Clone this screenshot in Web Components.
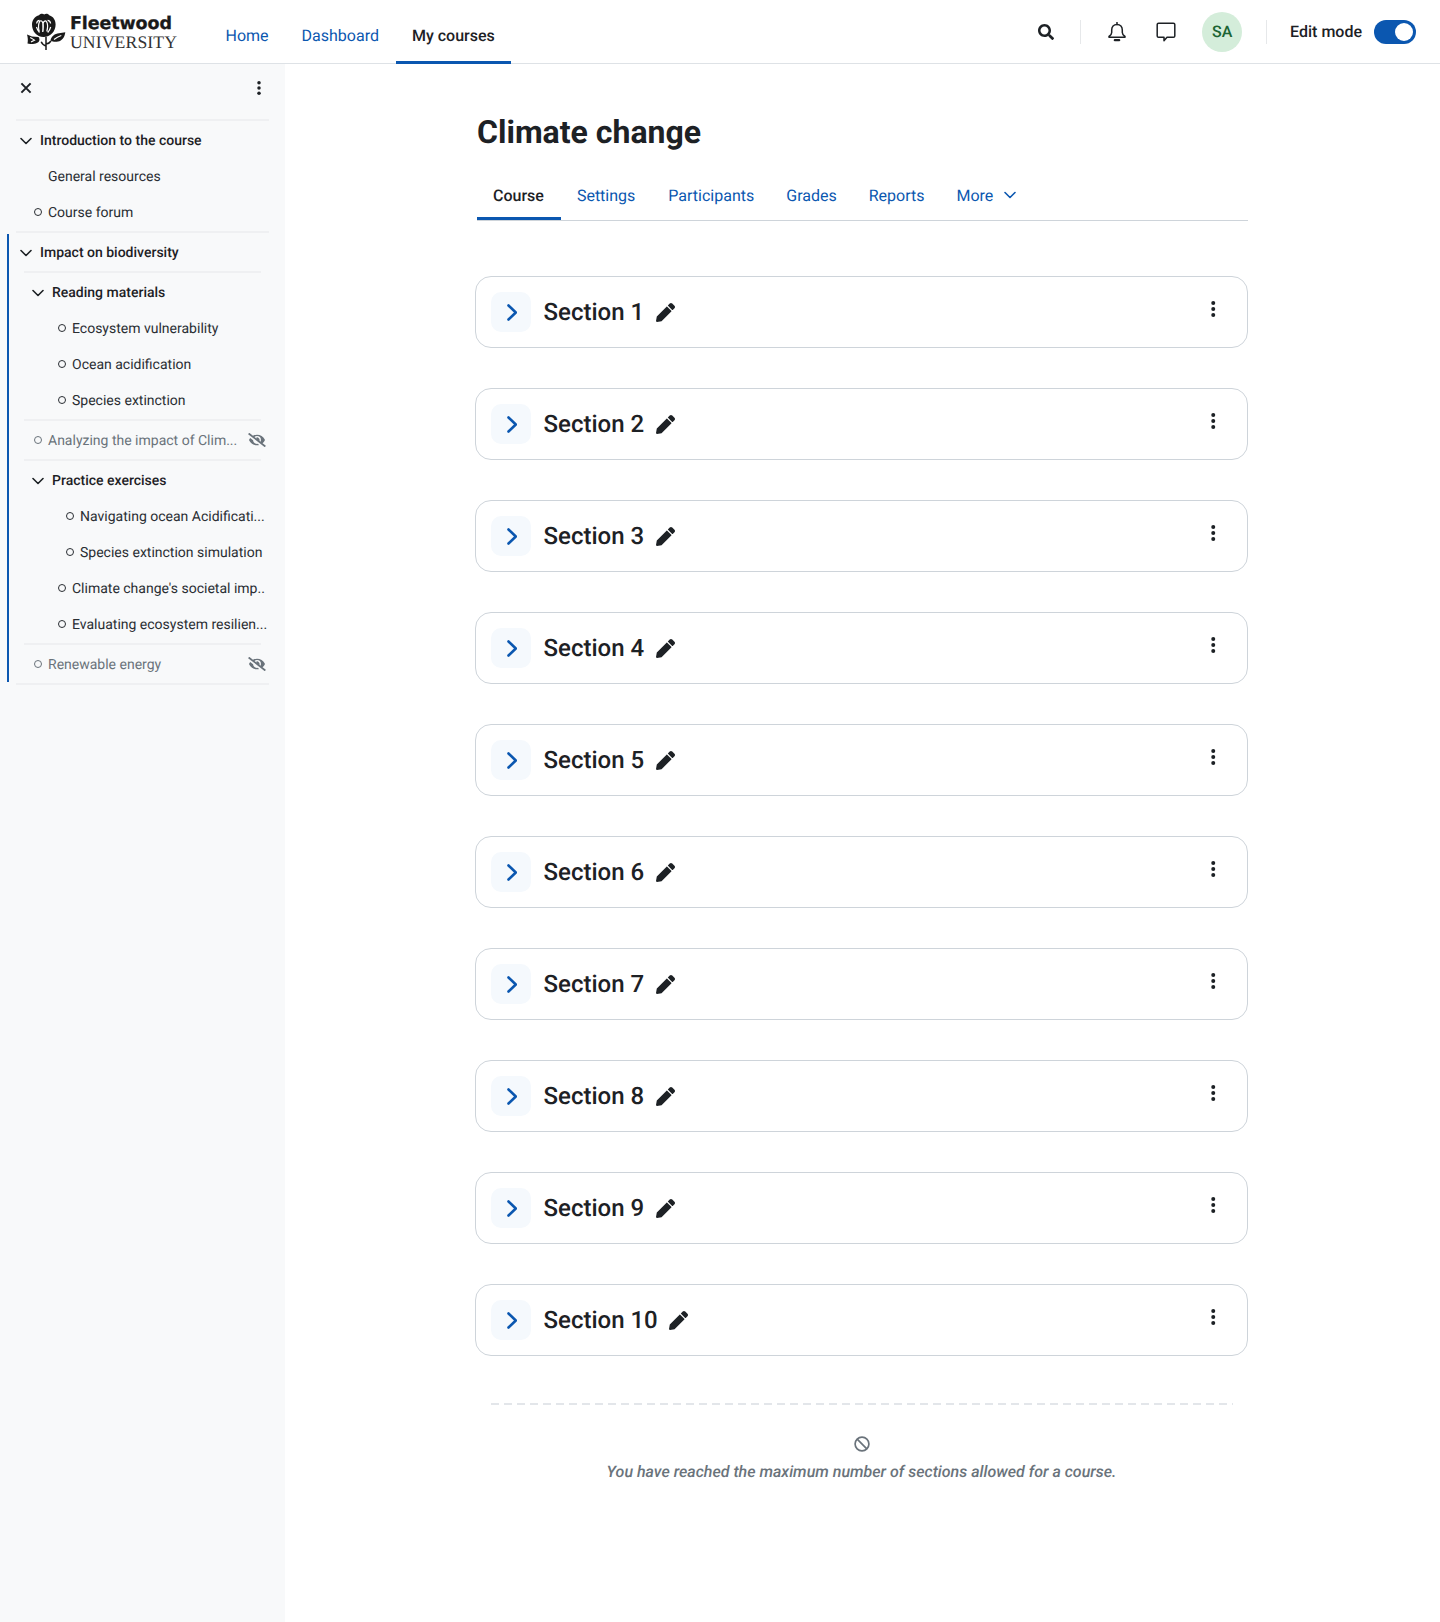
<!DOCTYPE html>
<html lang="en">
<head>
<meta charset="utf-8">
<title>Climate change</title>
<style>
  body { margin: 0; background: #fff; color: #1d2125; font-family: Roboto, "Liberation Sans", sans-serif; text-rendering: geometricPrecision; }
</style>
</head>
<body>
<course-page>
  <site-header slot="header"></site-header>

  <course-index slot="side">
    <index-divider></index-divider>
    <index-row kind="section">Introduction to the course</index-row>
    <index-row pad="32">General resources</index-row>
    <index-row kind="item" pad="18">Course forum</index-row>
    <index-divider></index-divider>
    <index-current>
      <index-row kind="section">Impact on biodiversity</index-row>
      <index-divider inset></index-divider>
      <index-row kind="section" pad="16">Reading materials</index-row>
      <index-row kind="item" pad="42">Ecosystem vulnerability</index-row>
      <index-row kind="item" pad="42">Ocean acidification</index-row>
      <index-row kind="item" pad="42">Species extinction</index-row>
      <index-divider inset></index-divider>
      <index-row kind="item" pad="18" muted>Analyzing the impact of Clim...</index-row>
      <index-divider inset></index-divider>
      <index-row kind="section" pad="16">Practice exercises</index-row>
      <index-row kind="item" pad="50">Navigating ocean Acidificati...</index-row>
      <index-row kind="item" pad="50">Species extinction simulation</index-row>
      <index-row kind="item" pad="42">Climate change's societal imp..</index-row>
      <index-row kind="item" pad="42">Evaluating ecosystem resilien...</index-row>
      <index-divider inset></index-divider>
      <index-row kind="item" pad="18" muted>Renewable energy</index-row>
    </index-current>
    <index-divider></index-divider>
  </course-index>

  <course-content heading="Climate change">
    <course-tabs></course-tabs>
    <section-card>Section 1</section-card>
    <section-card>Section 2</section-card>
    <section-card>Section 3</section-card>
    <section-card>Section 4</section-card>
    <section-card>Section 5</section-card>
    <section-card>Section 6</section-card>
    <section-card>Section 7</section-card>
    <section-card>Section 8</section-card>
    <section-card>Section 9</section-card>
    <section-card>Section 10</section-card>
    <section-limit>You have reached the maximum number of sections allowed for a course.</section-limit>
  </course-content>
</course-page>

<script>
const BLUE = "#0b57b0";

const ICONS = {
  pencil: `<svg viewBox="0 0 512 512" fill="currentColor"><path d="M497.9 142.1l-46.1 46.1c-4.7 4.7-12.3 4.7-17 0l-111-111c-4.7-4.7-4.7-12.3 0-17l46.1-46.1c18.7-18.7 49.1-18.7 67.9 0l60.1 60.1c18.8 18.7 18.8 49.1 0 67.9zM284.2 99.8L21.6 362.4.4 483.9c-2.9 16.4 11.4 30.6 27.8 27.8l121.5-21.3 262.6-262.6c4.7-4.7 4.7-12.3 0-17l-111-111c-4.8-4.7-12.4-4.7-17.1 0z"/></svg>`,
  search: `<svg viewBox="0 0 512 512" fill="currentColor"><path d="M505 442.7L405.3 343c-4.5-4.5-10.6-7-17-7H372c27.6-35.3 44-79.7 44-128C416 93.1 322.9 0 208 0S0 93.1 0 208s93.1 208 208 208c48.3 0 92.7-16.4 128-44v16.3c0 6.4 2.5 12.5 7 17l99.7 99.7c9.4 9.4 24.6 9.4 33.9 0l28.3-28.3c9.4-9.4 9.4-24.6.1-34zM208 336c-70.7 0-128-57.2-128-128 0-70.7 57.2-128 128-128 70.7 0 128 57.2 128 128 0 70.7-57.2 128-128 128z"/></svg>`,
  eyeslash: `<svg viewBox="0 0 640 512" fill="currentColor"><path d="M320 400c-75.85 0-137.25-58.71-142.9-133.11L72.2 185.82c-13.79 17.3-26.48 35.59-36.72 55.59a32.35 32.35 0 0 0 0 29.19C89.71 376.41 197.07 448 320 448c26.91 0 52.87-4 77.89-10.46L346 397.39a144.13 144.13 0 0 1-26 2.61zm313.82 58.1l-110.55-85.44a331.25 331.25 0 0 0 81.25-102.07 32.35 32.35 0 0 0 0-29.19C550.29 135.59 442.93 64 320 64a308.15 308.15 0 0 0-147.32 37.7L45.46 3.37A16 16 0 0 0 23 6.18L3.37 31.45A16 16 0 0 0 6.18 53.9l588.36 454.73a16 16 0 0 0 22.46-2.81l19.64-25.27a16 16 0 0 0-2.82-22.45zm-183.72-142l-39.3-30.38A94.75 94.75 0 0 0 416 256a94.76 94.76 0 0 0-121.31-92.21A47.65 47.65 0 0 1 304 192a46.64 46.64 0 0 1-1.54 10l-73.61-56.89A142.31 142.31 0 0 1 320 112a143.92 143.92 0 0 1 144 144c0 21.63-5.29 41.79-13.9 60.11z"/></svg>`,
  bell: `<svg viewBox="0 0 18 20" fill="none" stroke="currentColor" stroke-width="1.5" stroke-linejoin="round"><path d="M9 2.500c-3.400 0-5.300 2.500-5.300 5.500v2.600c0 1.600-1 2.800-2.700 3.900v.8h16v-.8c-1.700-1.100-2.700-2.300-2.700-3.900V8c0-3-1.900-5.500-5.300-5.500z"/><path d="M9 .5v2" stroke-linecap="round"/><path d="M6.800 18.200h4.400" stroke-width="2.200" stroke-linecap="round"/></svg>`,
  message: `<svg viewBox="0 0 20 20" fill="none" stroke="currentColor" stroke-width="1.5" stroke-linejoin="round"><path d="M2.600 1.200h14.800c.8 0 1.400.6 1.400 1.400v11.300c0 .8-.6 1.400-1.400 1.400H11l-3 3.400v-3.400H2.600c-.8 0-1.400-.6-1.400-1.400V2.600c0-.8.6-1.400 1.400-1.400z"/></svg>`,
  close: `<svg viewBox="0 0 12 12" fill="none" stroke="currentColor" stroke-width="2"><path d="M1.400 1.400l9.200 9.200M10.600 1.400l-9.200 9.200"/></svg>`,
  dots: `<svg viewBox="0 0 4 16" fill="currentColor"><circle cx="2" cy="2" r="2"/><circle cx="2" cy="8" r="2"/><circle cx="2" cy="14" r="2"/></svg>`,
  down: `<svg viewBox="0 0 12 8" fill="none" stroke="currentColor" stroke-width="1.6" stroke-linecap="round" stroke-linejoin="round"><path d="M1 1.500l5 5 5-5"/></svg>`,
  right: `<svg viewBox="0 0 10 17" fill="none" stroke="currentColor" stroke-width="2.600" stroke-linecap="round" stroke-linejoin="round"><path d="M1.500 1.500L8.800 8.500 1.500 15.500"/></svg>`,
  blocked: `<svg viewBox="0 0 16 16" fill="none" stroke="currentColor" stroke-width="1.700"><circle cx="8" cy="8" r="6.900"/><path d="M3.200 3.200l9.600 9.600"/></svg>`,
  logo: `<svg viewBox="0 0 40 38" fill="currentColor">
    <path d="M13 2.200c1.600-1.700 4-1.900 5.200-.6 1.500-1.300 4-1 5.400.9 3.600 1 6 4.500 6 9 0 6.800-5 12.500-12 12.500S6 18.300 6 11.500c0-4.500 2.800-8 7-9.300z"/>
    <path d="M10.500 14c.6 2.200 1.600 4 3 5.500M13.300 18.500c-1-3.500-1-7.200.2-9.800 1.400-1.800 3-.8 3.300 1.500.2 2.800.2 5.800-.1 8.800M17 18.500c.3-3 .4-6 .2-8.400.6-2.200 2.400-2.800 3.400-1.300.9 1.600 1.200 6 .2 9.700M24.700 14c-.6 2.200-1.600 4-3 5.500M10.600 10.500c.3-2 1.200-3.100 2.900-3.100M24.600 10.500c-.3-2-1.300-3.100-3-3.100" fill="none" stroke="#fff" stroke-width="1.200"/>
    <path d="M20 24v13M20 33c-2.400-.5-3.800-1.800-4.800-4.200M20 31c2.300-.3 3.900-1.200 5-3" fill="none" stroke="currentColor" stroke-width="1.500"/>
    <path d="M1 21.500l5 2 6.500.6c2.200 3 .5 5.800-2.800 6.300C6.500 30.800 3.800 31.400 1.500 30.500c.6-3 .4-6-.5-9z"/>
    <path d="M24.500 27.500c.7-4.200 4.300-7 8.500-7.300l6.300-1c-.6 4.800-3.200 8.700-7.300 9.300-2.800.5-5.500.2-7.500-1z"/>
    <path d="M4.200 24.500l4.300 2.600-3.500 1.800M28 26.500c2.200-1.900 4.800-3.200 7.300-4" fill="none" stroke="#fff" stroke-width="1.100"/>
  </svg>`,
};

class AppIcon extends HTMLElement {
  connectedCallback() {
    const w = this.getAttribute("w") || 16;
    const h = this.getAttribute("h") || w;
    this.attachShadow({ mode: "open" }).innerHTML = `
      <style>
        :host { display: inline-flex; flex: none; width: ${w}px; height: ${h}px; }
        svg { display: block; width: 100%; height: 100%; }
      </style>
      ${ICONS[this.getAttribute("name")]}`;
  }
}
customElements.define("app-icon", AppIcon);

class CoursePage extends HTMLElement {
  constructor() {
    super();
    this.attachShadow({ mode: "open" }).innerHTML = `
      <style>
        :host { display: block; min-height: 1622px; }
        .body { display: grid; grid-template-columns: 285px 1fr; min-height: 1558px; }
      </style>
      <slot name="header"></slot>
      <div class="body">
        <slot name="side"></slot>
        <slot></slot>
      </div>`;
  }
}
customElements.define("course-page", CoursePage);

class SiteHeader extends HTMLElement {
  constructor() {
    super();
    this.attachShadow({ mode: "open" }).innerHTML = `
      <style>
        :host { display: flex; align-items: center; box-sizing: border-box; height: 64px; border-bottom: 1px solid #dee2e6; color: #1d2125; font-size: 16px; }
        .logo { display: flex; align-items: center; gap: 5px; margin-left: 26px; width: 183.500px; flex: none; color: #1a1a1a; }
        .words { display: flex; flex-direction: column; margin-top: 3px; margin-left: -1px; }
        .words b { font: 700 17.500px/18px "DejaVu Sans", sans-serif; letter-spacing: -.1px; -webkit-text-stroke: .3px; }
        .words span { font: 400 17.700px/18px "Liberation Serif", serif; color: #333; letter-spacing: .1px; }
        nav { display: flex; align-self: stretch; gap: 1px; margin-bottom: -1px; }
        nav a { display: flex; align-items: center; padding: 6px 16px 0; color: ${BLUE}; }
        nav a.on { color: #1d2125; font-weight: 500; box-shadow: inset 0 -3px 0 ${BLUE}; }
        .tools { margin-left: auto; display: flex; align-items: center; margin-right: 24px; }
        .sep { width: 1px; height: 24px; background: #e6e8ea; }
        .avatar { width: 40px; height: 40px; border-radius: 50%; background: #d4edda; color: #1c6534; font-weight: 500; display: flex; align-items: center; justify-content: center; }
        .mode { font-weight: 500; }
        .toggle { width: 42px; height: 24px; border-radius: 12px; background: ${BLUE}; margin-left: 12px; display: flex; align-items: center; justify-content: flex-end; padding-right: 3px; box-sizing: border-box; }
        .toggle i { width: 18px; height: 18px; border-radius: 50%; background: #fff; }
      </style>
      <div class="logo">
        <app-icon name="logo" w="40" h="38"></app-icon>
        <div class="words"><b>Fleetwood</b><span>UNIVERSITY</span></div>
      </div>
      <nav>
        <a>Home</a>
        <a>Dashboard</a>
        <a class="on">My courses</a>
      </nav>
      <div class="tools">
        <app-icon name="search" w="16" style="margin-right:1px"></app-icon>
        <div class="sep" style="margin:0 27px 0 25px"></div>
        <app-icon name="bell" w="18" h="20"></app-icon>
        <app-icon name="message" w="20" style="margin-left:30px"></app-icon>
        <div class="avatar" style="margin-left:26px">SA</div>
        <div class="sep" style="margin:0 23px 0 24px"></div>
        <span class="mode">Edit mode</span>
        <div class="toggle"><i></i></div>
      </div>`;
  }
}
customElements.define("site-header", SiteHeader);

class CourseIndex extends HTMLElement {
  constructor() {
    super();
    this.attachShadow({ mode: "open" }).innerHTML = `
      <style>
        :host { display: block; background: #f8f9fa; padding: 0 16px; font-size: 14px; line-height: 20px; }
        .head { display: flex; align-items: center; justify-content: space-between; height: 48px; margin-bottom: 7px; padding: 0 8px 0 4px; color: #1d2125; }
      </style>
      <div class="head">
        <app-icon name="close" w="12"></app-icon>
        <app-icon name="dots" w="4" h="14"></app-icon>
      </div>
      <slot></slot>`;
  }
}
customElements.define("course-index", CourseIndex);

class IndexDivider extends HTMLElement {
  constructor() {
    super();
    this.attachShadow({ mode: "open" }).innerHTML = `
      <style>
        :host { display: block; height: 2px; margin: 1px 0; background: #eff0f2; }
        :host([inset]) { margin: 1px 8px; }
      </style>`;
  }
}
customElements.define("index-divider", IndexDivider);

// the section the user is in, marked with the blue bar on its left
class IndexCurrent extends HTMLElement {
  constructor() {
    super();
    this.attachShadow({ mode: "open" }).innerHTML = `
      <style>
        :host { display: block; margin-left: -9px; padding-left: 7px; border-left: 2px solid ${BLUE}; }
      </style>
      <slot></slot>`;
  }
}
customElements.define("index-current", IndexCurrent);

class IndexRow extends HTMLElement {
  connectedCallback() {
    const kind = this.getAttribute("kind");
    const muted = this.hasAttribute("muted");
    let lead = "";
    if (kind === "section") lead = `<app-icon class="chev" name="down" w="12" h="8"></app-icon>`;
    if (kind === "item") lead = `<span class="dot"></span>`;
    this.attachShadow({ mode: "open" }).innerHTML = `
      <style>
        :host { display: flex; align-items: center; box-sizing: border-box; height: 36px; white-space: nowrap; padding: 1px 3px 0 ${this.getAttribute("pad") || 4}px; color: #2a2e33; }
        :host([kind="section"]) { font-weight: 500; color: #1d2125; }
        :host([muted]) { color: #6a737b; }
        .chev { margin-right: 8px; }
        .dot { flex: none; box-sizing: border-box; width: 8px; height: 8px; border: 1px solid currentColor; border-radius: 50%; margin: -1px 6px 0 0; }
        .end { margin: -1px 0 0 auto; }
      </style>
      ${lead}<slot></slot>
      ${muted ? `<app-icon class="end" name="eyeslash" w="18" h="14"></app-icon>` : ""}`;
  }
}
customElements.define("index-row", IndexRow);

class CourseContent extends HTMLElement {
  connectedCallback() {
    this.attachShadow({ mode: "open" }).innerHTML = `
      <style>
        :host { display: block; box-sizing: border-box; padding: 49px 0 0 190px; width: 963px; }
        h1 { margin: 0 0 21px 2px; font: 700 32px/38px Roboto, sans-serif; color: #1d2125; }
      </style>
      <h1>${this.getAttribute("heading")}</h1>
      <slot></slot>`;
  }
}
customElements.define("course-content", CourseContent);

class CourseTabs extends HTMLElement {
  constructor() {
    super();
    this.attachShadow({ mode: "open" }).innerHTML = `
      <style>
        :host { display: flex; height: 49px; box-sizing: border-box; margin: 0 0 55px 2px; border-bottom: 1px solid #ced4da; font-size: 16px; }
        a { display: flex; align-items: center; gap: 11px; padding: 0 16px 2px; height: 48px; box-sizing: border-box; color: ${BLUE}; }
        a.on { color: #1d2125; font-weight: 500; box-shadow: inset 0 -3px 0 ${BLUE}; padding-right: 17px; }
        a.wide { padding-right: 17px; }
      </style>
      <a class="on">Course</a>
      <a class="wide">Settings</a>
      <a>Participants</a>
      <a>Grades</a>
      <a>Reports</a>
      <a>More <app-icon name="down" w="12" h="8"></app-icon></a>`;
  }
}
customElements.define("course-tabs", CourseTabs);

class SectionCard extends HTMLElement {
  constructor() {
    super();
    this.attachShadow({ mode: "open" }).innerHTML = `
      <style>
        :host { display: flex; align-items: center; box-sizing: border-box; height: 72px; margin-bottom: 40px; padding: 0 31.500px 0 15px; border: 1px solid #ced4da; border-radius: 16px; background: #fff; color: #1d2125; }
        .toggle { width: 40px; height: 40px; box-sizing: border-box; padding-left: 1px; border-radius: 10px; background: #f5f9fd; color: ${BLUE}; display: flex; align-items: center; justify-content: center; margin-right: 12.500px; }
        .title { font: 500 24px/30px Roboto, sans-serif; margin-right: 11.500px; }
        .dots { margin-left: auto; margin-top: -6px; }
      </style>
      <div class="toggle"><app-icon name="right" w="10" h="17"></app-icon></div>
      <span class="title"><slot></slot></span>
      <app-icon name="pencil" w="19"></app-icon>
      <app-icon class="dots" name="dots" w="4.500" h="16"></app-icon>`;
  }
}
customElements.define("section-card", SectionCard);

class SectionLimit extends HTMLElement {
  constructor() {
    super();
    this.attachShadow({ mode: "open" }).innerHTML = `
      <style>
        :host { display: flex; flex-direction: column; align-items: center; margin-top: 47px; color: #6a737b; font-size: 16px; font-style: italic; font-weight: 500; }
        .rule { align-self: stretch; margin: 0 15px 31px 16px; height: 2px; background: repeating-linear-gradient(90deg, #e3e6ea 0 8px, transparent 8px 13px); }
        p { margin: 10px 0 0; line-height: 20px; }
      </style>
      <div class="rule"></div>
      <app-icon name="blocked" w="16"></app-icon>
      <p><slot></slot></p>`;
  }
}
customElements.define("section-limit", SectionLimit);
</script>
</body>
</html>
